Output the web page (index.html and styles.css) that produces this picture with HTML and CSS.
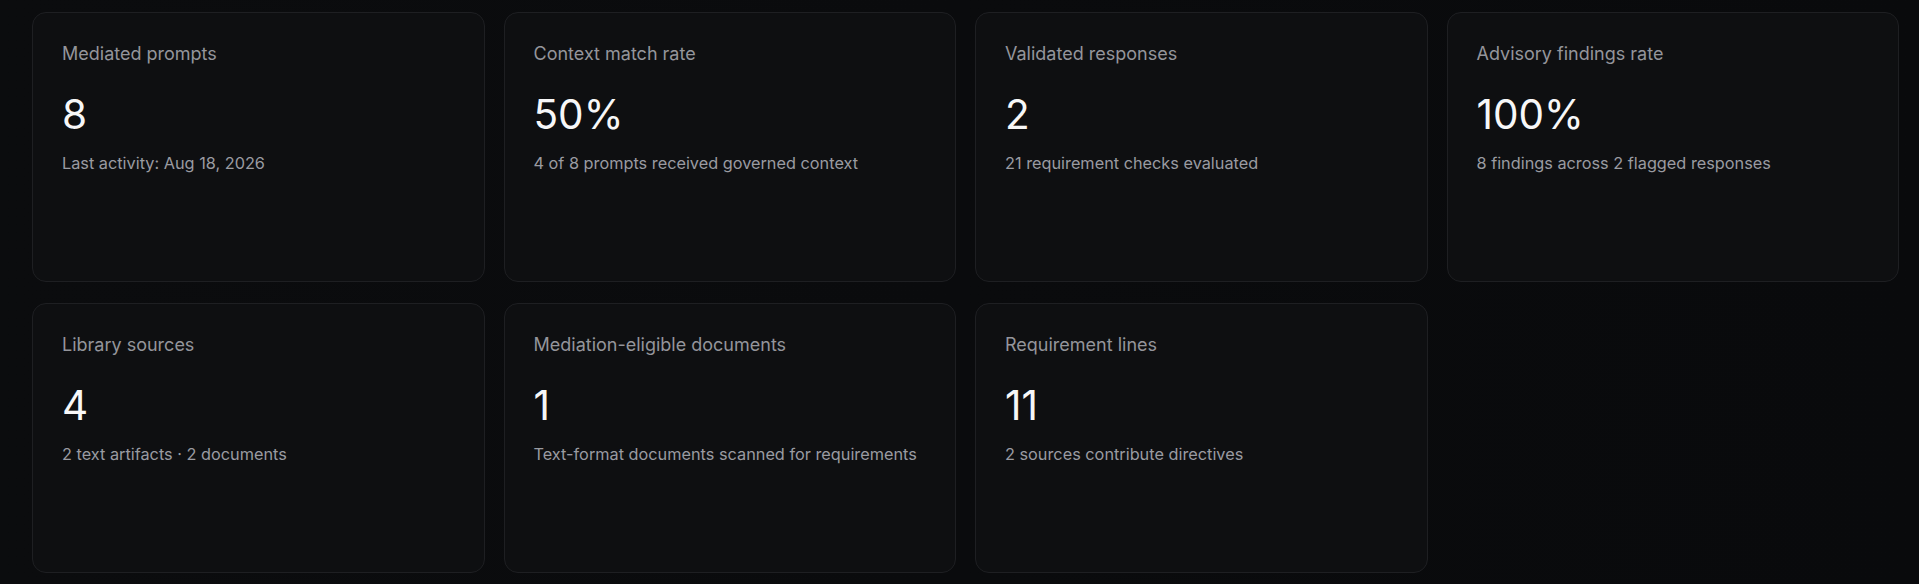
FILE: index.html
```html
<!DOCTYPE html>
<html lang="en">
<head>
<meta charset="utf-8">
<title>Overview metrics</title>
<link rel="stylesheet" href="styles.css">
</head>
<body>
<main class="page">
  <section class="grid">
    <article class="card">
      <div class="label">Mediated prompts</div>
      <div class="value">8</div>
      <div class="sub">Last activity: Aug 18, 2026</div>
    </article>
    <article class="card">
      <div class="label">Context match rate</div>
      <div class="value">50%</div>
      <div class="sub">4 of 8 prompts received governed context</div>
    </article>
    <article class="card">
      <div class="label">Validated responses</div>
      <div class="value">2</div>
      <div class="sub">21 requirement checks evaluated</div>
    </article>
    <article class="card">
      <div class="label">Advisory findings rate</div>
      <div class="value">100%</div>
      <div class="sub">8 findings across 2 flagged responses</div>
    </article>
    <article class="card">
      <div class="label">Library sources</div>
      <div class="value">4</div>
      <div class="sub">2 text artifacts · 2 documents</div>
    </article>
    <article class="card">
      <div class="label">Mediation-eligible documents</div>
      <div class="value">1</div>
      <div class="sub">Text-format documents scanned for requirements</div>
    </article>
    <article class="card">
      <div class="label">Requirement lines</div>
      <div class="value">11</div>
      <div class="sub">2 sources contribute directives</div>
    </article>
  </section>
</main>
</body>
</html>
```
FILE: styles.css
```css
html, body {
  margin: 0;
  padding: 0;
  height: 100%;
}
body {
  background: linear-gradient(90deg, #0b0c0e 0%, #090a0c 100%);
  font-family: Inter, "Noto Sans", "Liberation Sans", sans-serif;
  color: #f4f4f5;
}
.page {
  padding: 12px 20px 0 32px;
}
.grid {
  display: grid;
  grid-template-columns: repeat(4, 1fr);
  grid-template-rows: 270px 270px;
  column-gap: 19px;
  row-gap: 21px;
}
.card {
  box-sizing: border-box;
  background: #0e0f11;
  border: 1px solid #1e1f22;
  border-radius: 14px;
  padding: 29px 28px 29px 29px;
  display: flex;
  flex-direction: column;
}
.label {
  font-size: 18px;
  line-height: 24px;
  color: #94959b;
}
.value {
  margin-top: 28px;
  font-size: 40.5px;
  line-height: 41px;
  color: #f7f7f8;
  font-weight: 400;
}
.sub {
  margin-top: 16px;
  font-size: 16.3px;
  line-height: 24px;
  color: #9a9ba1;
  white-space: nowrap;
}
```
